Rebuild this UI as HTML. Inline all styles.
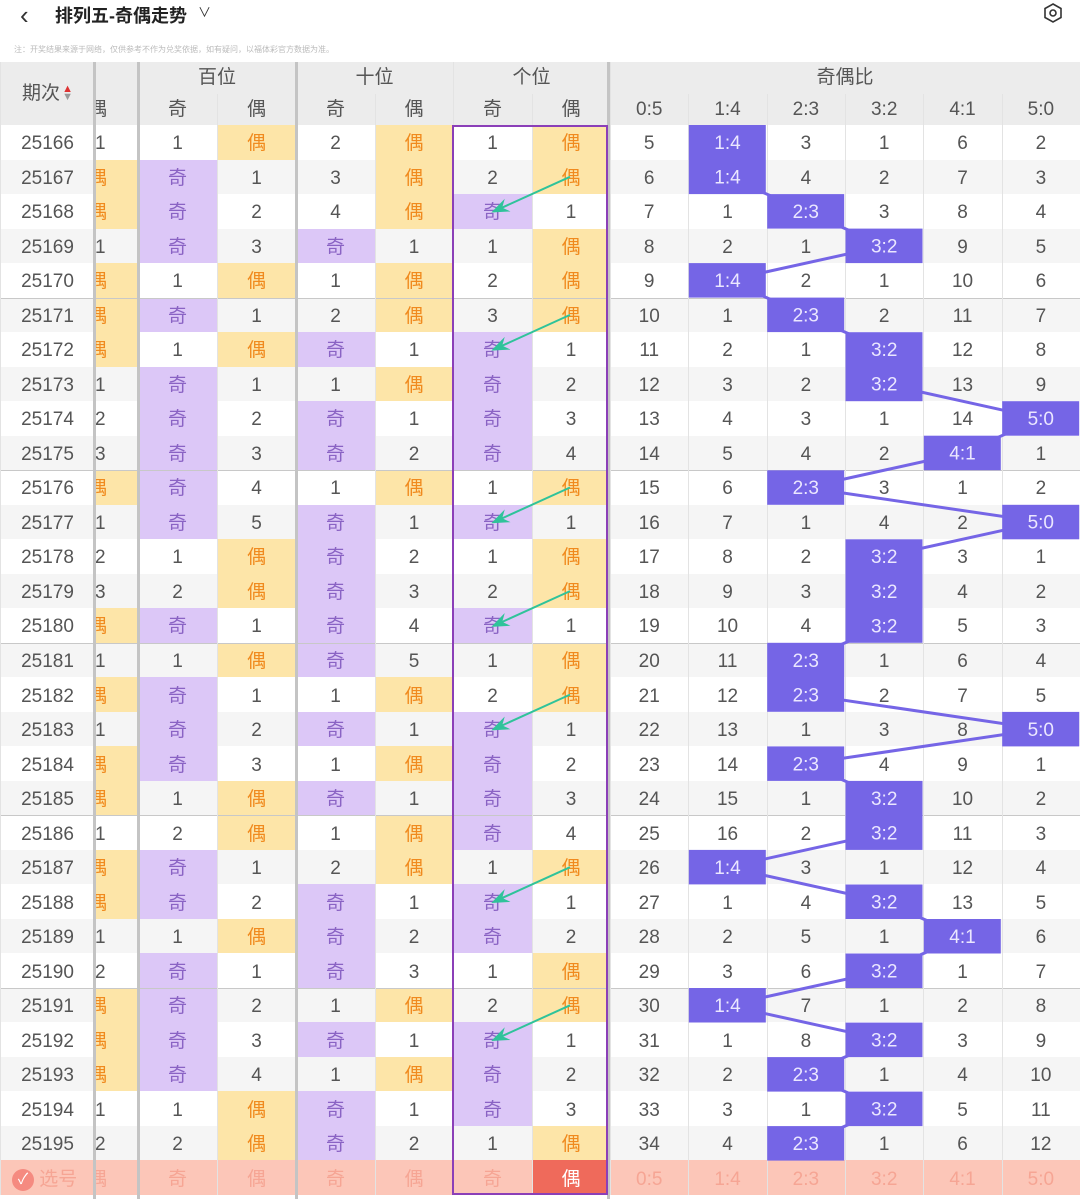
<!DOCTYPE html>
<html><head><meta charset="utf-8"><style>
*{margin:0;padding:0;box-sizing:border-box}
body{width:1080px;height:1199px;background:#fff;position:relative;overflow:hidden;font-family:"Liberation Sans","Noto Sans CJK SC",sans-serif}
.top{position:absolute;left:0;top:0;width:1080px;height:62px;background:#fff}
.back{position:absolute;left:20px;top:0px;font-size:26px;color:#333}
.title{position:absolute;left:55px;top:2px;font-size:18px;font-weight:bold;color:#222}
.dd{position:absolute;left:198px;top:2px;font-size:13px;color:#333}
.note{position:absolute;left:14px;top:44px;font-size:8px;color:#bbb;white-space:nowrap}
table{position:absolute;left:0;top:62px;border-collapse:collapse;table-layout:fixed;width:1080px}
td{padding:0;text-align:center;font-size:19px;color:#555;box-shadow:inset 1px 0 #e3e3e3;overflow:hidden;white-space:nowrap;line-height:34px}
tbody td{line-height:31px;padding-top:3px}
thead td{background:#ececec;color:#555;line-height:30px}
thead tr.h1 td{height:32px}
thead tr.h2 td{height:31px}
tbody tr{height:34.52px}
tbody td{height:34.52px}
tbody tr.a td{background:#f5f5f5}
tbody tr.g td{box-shadow:inset 1px 0 #e3e3e3,inset 0 1px #c8c8c8}
td.p{text-align:left}
td.p.e,td.pe{text-indent:-7px}
td.e{background:#fde5a8 !important;color:#f08a1e}
td.o{background:#dcc7f7 !important;color:#8a63c4}
tr.s td{background:#fcc6b8 !important;color:#f6a594}
tr.s td.r{background:#ef6a5b !important;color:#fff}
.vl{position:absolute;top:62px;width:3px;height:1137px;background:#c4c4c4}
.box{position:absolute;left:452px;top:125px;width:156px;height:1070px;border:2px solid #8b3fb8}
svg{position:absolute;left:0;top:0}
.sort{display:inline-block;vertical-align:middle;line-height:8px;font-size:11px;margin-left:2px}
</style></head><body>
<div class="top">
<div class="back">&#x2039;</div>
<div class="title">排列五-奇偶走势</div>
<div class="dd">&#x2228;</div>
<svg style="left:1042px;top:2px" width="22" height="22" viewBox="0 0 22 22"><polygon points="11,2 19,6.5 19,15.5 11,20 3,15.5 3,6.5" fill="none" stroke="#333" stroke-width="1.6"/><circle cx="11" cy="11" r="3" fill="none" stroke="#333" stroke-width="1.6"/></svg>
<div class="note">注：开奖结果来源于网络，仅供参考不作为兑奖依据，如有疑问，以福体彩官方数据为准。</div>
</div>
<table>
<colgroup><col style="width:95px"><col style="width:43px"><col style="width:79px"><col style="width:79px"><col style="width:79px"><col style="width:78px"><col style="width:79px"><col style="width:78px"><col style="width:78.33px"><col style="width:78.33px"><col style="width:78.33px"><col style="width:78.33px"><col style="width:78.33px"><col style="width:78.35px"></colgroup>
<thead>
<tr class="h1"><td rowspan="2">期次<span class="sort"><span style="color:#d33">&#x25B2;</span><br><span style="color:#999">&#x25BC;</span></span></td><td></td><td colspan="2">百位</td><td colspan="2">十位</td><td colspan="2">个位</td><td colspan="6">奇偶比</td></tr>
<tr class="h2"><td class="pe" style="text-align:left">偶</td><td>奇</td><td>偶</td><td>奇</td><td>偶</td><td>奇</td><td>偶</td><td>0:5</td><td>1:4</td><td>2:3</td><td>3:2</td><td>4:1</td><td>5:0</td></tr>
</thead>
<tbody>
<tr><td>25166</td><td class="p">1</td><td>1</td><td class="e">偶</td><td>2</td><td class="e">偶</td><td>1</td><td class="e">偶</td><td>5</td><td></td><td>3</td><td>1</td><td>6</td><td>2</td></tr>
<tr class="a"><td>25167</td><td class="p e">偶</td><td class="o">奇</td><td>1</td><td>3</td><td class="e">偶</td><td>2</td><td class="e">偶</td><td>6</td><td></td><td>4</td><td>2</td><td>7</td><td>3</td></tr>
<tr><td>25168</td><td class="p e">偶</td><td class="o">奇</td><td>2</td><td>4</td><td class="e">偶</td><td class="o">奇</td><td>1</td><td>7</td><td>1</td><td></td><td>3</td><td>8</td><td>4</td></tr>
<tr class="a"><td>25169</td><td class="p">1</td><td class="o">奇</td><td>3</td><td class="o">奇</td><td>1</td><td>1</td><td class="e">偶</td><td>8</td><td>2</td><td>1</td><td></td><td>9</td><td>5</td></tr>
<tr><td>25170</td><td class="p e">偶</td><td>1</td><td class="e">偶</td><td>1</td><td class="e">偶</td><td>2</td><td class="e">偶</td><td>9</td><td></td><td>2</td><td>1</td><td>10</td><td>6</td></tr>
<tr class="a g"><td>25171</td><td class="p e">偶</td><td class="o">奇</td><td>1</td><td>2</td><td class="e">偶</td><td>3</td><td class="e">偶</td><td>10</td><td>1</td><td></td><td>2</td><td>11</td><td>7</td></tr>
<tr><td>25172</td><td class="p e">偶</td><td>1</td><td class="e">偶</td><td class="o">奇</td><td>1</td><td class="o">奇</td><td>1</td><td>11</td><td>2</td><td>1</td><td></td><td>12</td><td>8</td></tr>
<tr class="a"><td>25173</td><td class="p">1</td><td class="o">奇</td><td>1</td><td>1</td><td class="e">偶</td><td class="o">奇</td><td>2</td><td>12</td><td>3</td><td>2</td><td></td><td>13</td><td>9</td></tr>
<tr><td>25174</td><td class="p">2</td><td class="o">奇</td><td>2</td><td class="o">奇</td><td>1</td><td class="o">奇</td><td>3</td><td>13</td><td>4</td><td>3</td><td>1</td><td>14</td><td></td></tr>
<tr class="a"><td>25175</td><td class="p">3</td><td class="o">奇</td><td>3</td><td class="o">奇</td><td>2</td><td class="o">奇</td><td>4</td><td>14</td><td>5</td><td>4</td><td>2</td><td></td><td>1</td></tr>
<tr class="g"><td>25176</td><td class="p e">偶</td><td class="o">奇</td><td>4</td><td>1</td><td class="e">偶</td><td>1</td><td class="e">偶</td><td>15</td><td>6</td><td></td><td>3</td><td>1</td><td>2</td></tr>
<tr class="a"><td>25177</td><td class="p">1</td><td class="o">奇</td><td>5</td><td class="o">奇</td><td>1</td><td class="o">奇</td><td>1</td><td>16</td><td>7</td><td>1</td><td>4</td><td>2</td><td></td></tr>
<tr><td>25178</td><td class="p">2</td><td>1</td><td class="e">偶</td><td class="o">奇</td><td>2</td><td>1</td><td class="e">偶</td><td>17</td><td>8</td><td>2</td><td></td><td>3</td><td>1</td></tr>
<tr class="a"><td>25179</td><td class="p">3</td><td>2</td><td class="e">偶</td><td class="o">奇</td><td>3</td><td>2</td><td class="e">偶</td><td>18</td><td>9</td><td>3</td><td></td><td>4</td><td>2</td></tr>
<tr><td>25180</td><td class="p e">偶</td><td class="o">奇</td><td>1</td><td class="o">奇</td><td>4</td><td class="o">奇</td><td>1</td><td>19</td><td>10</td><td>4</td><td></td><td>5</td><td>3</td></tr>
<tr class="a g"><td>25181</td><td class="p">1</td><td>1</td><td class="e">偶</td><td class="o">奇</td><td>5</td><td>1</td><td class="e">偶</td><td>20</td><td>11</td><td></td><td>1</td><td>6</td><td>4</td></tr>
<tr><td>25182</td><td class="p e">偶</td><td class="o">奇</td><td>1</td><td>1</td><td class="e">偶</td><td>2</td><td class="e">偶</td><td>21</td><td>12</td><td></td><td>2</td><td>7</td><td>5</td></tr>
<tr class="a"><td>25183</td><td class="p">1</td><td class="o">奇</td><td>2</td><td class="o">奇</td><td>1</td><td class="o">奇</td><td>1</td><td>22</td><td>13</td><td>1</td><td>3</td><td>8</td><td></td></tr>
<tr><td>25184</td><td class="p e">偶</td><td class="o">奇</td><td>3</td><td>1</td><td class="e">偶</td><td class="o">奇</td><td>2</td><td>23</td><td>14</td><td></td><td>4</td><td>9</td><td>1</td></tr>
<tr class="a"><td>25185</td><td class="p e">偶</td><td>1</td><td class="e">偶</td><td class="o">奇</td><td>1</td><td class="o">奇</td><td>3</td><td>24</td><td>15</td><td>1</td><td></td><td>10</td><td>2</td></tr>
<tr class="g"><td>25186</td><td class="p">1</td><td>2</td><td class="e">偶</td><td>1</td><td class="e">偶</td><td class="o">奇</td><td>4</td><td>25</td><td>16</td><td>2</td><td></td><td>11</td><td>3</td></tr>
<tr class="a"><td>25187</td><td class="p e">偶</td><td class="o">奇</td><td>1</td><td>2</td><td class="e">偶</td><td>1</td><td class="e">偶</td><td>26</td><td></td><td>3</td><td>1</td><td>12</td><td>4</td></tr>
<tr><td>25188</td><td class="p e">偶</td><td class="o">奇</td><td>2</td><td class="o">奇</td><td>1</td><td class="o">奇</td><td>1</td><td>27</td><td>1</td><td>4</td><td></td><td>13</td><td>5</td></tr>
<tr class="a"><td>25189</td><td class="p">1</td><td>1</td><td class="e">偶</td><td class="o">奇</td><td>2</td><td class="o">奇</td><td>2</td><td>28</td><td>2</td><td>5</td><td>1</td><td></td><td>6</td></tr>
<tr><td>25190</td><td class="p">2</td><td class="o">奇</td><td>1</td><td class="o">奇</td><td>3</td><td>1</td><td class="e">偶</td><td>29</td><td>3</td><td>6</td><td></td><td>1</td><td>7</td></tr>
<tr class="a g"><td>25191</td><td class="p e">偶</td><td class="o">奇</td><td>2</td><td>1</td><td class="e">偶</td><td>2</td><td class="e">偶</td><td>30</td><td></td><td>7</td><td>1</td><td>2</td><td>8</td></tr>
<tr><td>25192</td><td class="p e">偶</td><td class="o">奇</td><td>3</td><td class="o">奇</td><td>1</td><td class="o">奇</td><td>1</td><td>31</td><td>1</td><td>8</td><td></td><td>3</td><td>9</td></tr>
<tr class="a"><td>25193</td><td class="p e">偶</td><td class="o">奇</td><td>4</td><td>1</td><td class="e">偶</td><td class="o">奇</td><td>2</td><td>32</td><td>2</td><td></td><td>1</td><td>4</td><td>10</td></tr>
<tr><td>25194</td><td class="p">1</td><td>1</td><td class="e">偶</td><td class="o">奇</td><td>1</td><td class="o">奇</td><td>3</td><td>33</td><td>3</td><td>1</td><td></td><td>5</td><td>11</td></tr>
<tr class="a"><td>25195</td><td class="p">2</td><td>2</td><td class="e">偶</td><td class="o">奇</td><td>2</td><td>1</td><td class="e">偶</td><td>34</td><td>4</td><td></td><td>1</td><td>6</td><td>12</td></tr>
<tr class="s"><td style="text-align:left;padding-left:12px"><span style="display:inline-block;width:22px;height:22px;border-radius:50%;background:#f58a80;color:#fff;font-size:15px;line-height:22px;text-align:center;vertical-align:middle">&#x2713;</span> 选号</td><td class="p pe">偶</td><td>奇</td><td>偶</td><td>奇</td><td>偶</td><td>奇</td><td class="r">偶</td><td>0:5</td><td>1:4</td><td>2:3</td><td>3:2</td><td>4:1</td><td>5:0</td></tr>
</tbody>
</table>
<div class="vl" style="left:93px"></div>
<div class="vl" style="left:137px"></div>
<div class="vl" style="left:295px"></div>
<div class="vl" style="left:607px"></div>
<div class="box"></div>
<svg width="1080" height="1199" viewBox="0 0 1080 1199">
<defs><marker id="ah" markerWidth="18" markerHeight="14" refX="15" refY="7" orient="auto" markerUnits="userSpaceOnUse"><path d="M18,7 L0,0 L6,7 L0,14 Z" fill="#2fc39a"/></marker></defs>
<polyline fill="none" stroke="#7565e6" stroke-width="3" points="727.5,142.3 727.5,176.8 805.8,211.3 884.2,245.9 727.5,280.4 805.8,314.9 884.2,349.4 884.2,383.9 1040.8,418.5 962.5,453 805.8,487.5 1040.8,522 884.2,556.5 884.2,591.1 884.2,625.6 805.8,660.1 805.8,694.6 1040.8,729.1 805.8,763.7 884.2,798.2 884.2,832.7 727.5,867.2 884.2,901.7 962.5,936.3 884.2,970.8 727.5,1005.3 884.2,1039.8 805.8,1074.3 884.2,1108.9 805.8,1143.4"/>
<g fill="#7565e6">
<rect x="688.8" y="125" width="77" height="69.1"/>
<rect x="767.2" y="194.1" width="77" height="34.5"/>
<rect x="845.5" y="228.6" width="77" height="34.5"/>
<rect x="688.8" y="263.1" width="77" height="34.5"/>
<rect x="767.2" y="297.6" width="77" height="34.5"/>
<rect x="845.5" y="332.2" width="77" height="69"/>
<rect x="1002.2" y="401.2" width="77" height="34.5"/>
<rect x="923.8" y="435.7" width="77" height="34.5"/>
<rect x="767.2" y="470.3" width="77" height="34.5"/>
<rect x="1002.2" y="504.8" width="77" height="34.5"/>
<rect x="845.5" y="539.3" width="77" height="103.5"/>
<rect x="767.2" y="642.8" width="77" height="69"/>
<rect x="1002.2" y="711.9" width="77" height="34.5"/>
<rect x="767.2" y="746.4" width="77" height="34.5"/>
<rect x="845.5" y="780.9" width="77" height="69"/>
<rect x="688.8" y="849.9" width="77" height="34.5"/>
<rect x="845.5" y="884.5" width="77" height="34.5"/>
<rect x="923.8" y="919" width="77" height="34.5"/>
<rect x="845.5" y="953.5" width="77" height="34.5"/>
<rect x="688.8" y="988" width="77" height="34.5"/>
<rect x="845.5" y="1022.6" width="77" height="34.5"/>
<rect x="767.2" y="1057.1" width="77" height="34.5"/>
<rect x="845.5" y="1091.6" width="77" height="34.5"/>
<rect x="767.2" y="1126.1" width="77" height="34.5"/>
</g>
<g fill="#ebe7ff" font-size="19" text-anchor="middle" font-family="Liberation Sans,sans-serif">
<text x="727.5" y="149">1:4</text><text x="727.5" y="183.5">1:4</text><text x="805.8" y="218">2:3</text><text x="884.2" y="252.6">3:2</text><text x="727.5" y="287.1">1:4</text><text x="805.8" y="321.6">2:3</text><text x="884.2" y="356.1">3:2</text><text x="884.2" y="390.6">3:2</text><text x="1040.8" y="425.2">5:0</text><text x="962.5" y="459.7">4:1</text><text x="805.8" y="494.2">2:3</text><text x="1040.8" y="528.7">5:0</text><text x="884.2" y="563.2">3:2</text><text x="884.2" y="597.8">3:2</text><text x="884.2" y="632.3">3:2</text><text x="805.8" y="666.8">2:3</text><text x="805.8" y="701.3">2:3</text><text x="1040.8" y="735.8">5:0</text><text x="805.8" y="770.4">2:3</text><text x="884.2" y="804.9">3:2</text><text x="884.2" y="839.4">3:2</text><text x="727.5" y="873.9">1:4</text><text x="884.2" y="908.4">3:2</text><text x="962.5" y="943">4:1</text><text x="884.2" y="977.5">3:2</text><text x="727.5" y="1012">1:4</text><text x="884.2" y="1046.5">3:2</text><text x="805.8" y="1081">2:3</text><text x="884.2" y="1115.6">3:2</text><text x="805.8" y="1150.1">2:3</text>
</g>
<g stroke="#2fc39a" stroke-width="2" marker-end="url(#ah)">
<line x1="570" y1="176.8" x2="494" y2="211.3"/>
<line x1="570" y1="314.9" x2="494" y2="349.4"/>
<line x1="570" y1="487.5" x2="494" y2="522"/>
<line x1="570" y1="591.1" x2="494" y2="625.6"/>
<line x1="570" y1="694.6" x2="494" y2="729.1"/>
<line x1="570" y1="867.2" x2="494" y2="901.7"/>
<line x1="570" y1="1005.3" x2="494" y2="1039.8"/>
</g>
</svg>
</body></html>
